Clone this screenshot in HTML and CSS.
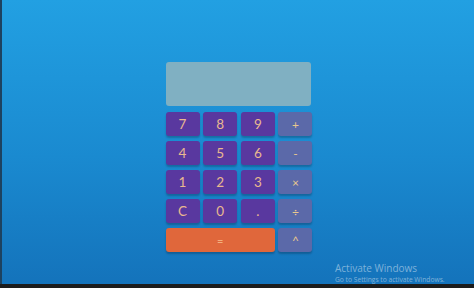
FILE: index.html
```html
<!DOCTYPE html>
<html lang="en">
<head>
    <meta charset="UTF-8">
    <meta name="viewport" content="width=device-width, initial-scale=1.0">
    <title>Calculator</title>
    <link rel="stylesheet" href="styles.css">
</head>
<body>
    <div class="screen">
        <div class="calc">
            <div class="display"></div>
            <div class="keys">
                <button class="key">7</button>
                <button class="key">8</button>
                <button class="key">9</button>
                <button class="key op">+</button>
                <button class="key">4</button>
                <button class="key">5</button>
                <button class="key">6</button>
                <button class="key op">-</button>
                <button class="key">1</button>
                <button class="key">2</button>
                <button class="key">3</button>
                <button class="key op">&times;</button>
                <button class="key">C</button>
                <button class="key">0</button>
                <button class="key">.</button>
                <button class="key op">&divide;</button>
                <button class="key equals">=</button>
                <button class="key op">^</button>
            </div>
        </div>
        <div class="watermark">
            <div class="wm-title">Activate Windows</div>
            <div class="wm-sub">Go to Settings to activate Windows.</div>
        </div>
    </div>
    <div class="taskbar"></div>
</body>
</html>
```

FILE: styles.css
```css
body {
    margin: 0;
    width: 474px;
    height: 288px;
    overflow: hidden;
    font-family: Lato, 'Open Sans', sans-serif;
    background: #1c1c1c;
}
.screen {
    position: relative;
    height: 284px;
    border-left: 2px solid #1d4260;
    background: linear-gradient(180deg, #22a0e2 0%, #1a8ad0 55%, #1473bb 100%);
    display: flex;
    justify-content: center;
    align-items: flex-start;
}
.calc {
    margin-top: 62px;
    width: 145px;
}
.display {
    height: 44px;
    border-radius: 3px;
    background: #80b0c2;
    margin-bottom: 6px;
}
.keys {
    display: grid;
    grid-template-columns: repeat(4, 34px);
    grid-auto-rows: 24px;
    column-gap: 3.66px;
    row-gap: 5px;
}
.key {
    border: none;
    border-radius: 3px;
    padding: 0;
    background: #59389f;
    color: #e9b98f;
    font-family: Lato, 'Open Sans', sans-serif;
    font-size: 13.5px;
    box-shadow: 0 2px 2px rgba(0, 0, 0, 0.22);
    cursor: pointer;
}
.op {
    background: #5b69a9;
    color: #e8c88e;
    font-size: 12px;
}
.equals {
    grid-column: span 3;
    background: #e0673b;
    color: #f2b07e;
    font-size: 11px;
}
.watermark {
    position: absolute;
    left: 333px;
    top: 262px;
    color: rgba(255, 255, 255, 0.45);
    font-family: 'Open Sans', sans-serif;
}
.wm-title {
    font-size: 10px;
    line-height: 13px;
}
.wm-sub {
    font-size: 6.7px;
    line-height: 10px;
}
.taskbar {
    height: 4px;
    background: #1c1c1c;
}
```
